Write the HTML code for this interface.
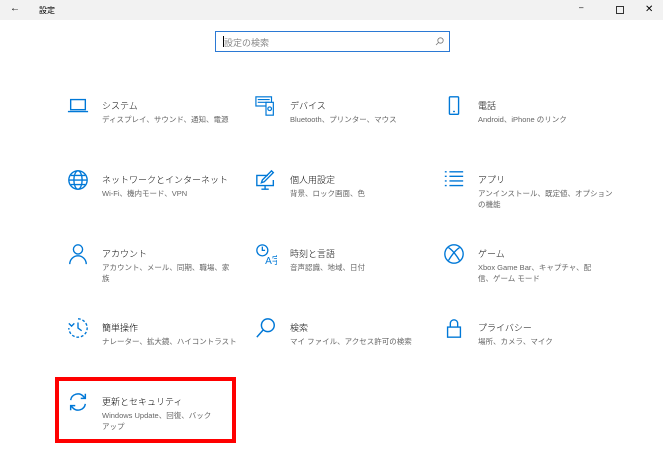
<!DOCTYPE html>
<html><head><meta charset="utf-8"><style>
*{margin:0;padding:0;box-sizing:border-box}
body{width:663px;height:450px;background:#fff;font-family:"Liberation Sans","Noto Sans CJK JP",sans-serif;position:relative;overflow:hidden;color:#000}
.tb{position:absolute;left:0;top:0;width:663px;height:20px;background:#f2f2f2}
.tb span{position:absolute;font-size:8px;top:5px}
.search{position:absolute;left:215px;top:31px;width:235px;height:21px;border:1.5px solid #2b79d4;background:#fff}
.search .ph{position:absolute;left:8px;top:4px;font-size:9px;color:#888}
.search .cur{position:absolute;left:7px;top:4px;width:1px;height:11px;background:#000}
.it{position:absolute}
.it .t{position:absolute;font-size:9px;white-space:nowrap;top:0;font-weight:300}
.it .s{position:absolute;font-size:7.5px;color:#666;top:15px;line-height:11px;width:150px}
.it svg{position:absolute;left:-35px;top:-4px;width:22px;height:22px}
.red{position:absolute;left:55px;top:377px;width:181px;height:66px;border:4px solid #f00}
</style></head><body>
<div class="tb"><span style="left:10px;font-size:10px;top:3px">←</span><span style="left:39px">設定</span>
<span style="left:579px;top:3px">–</span>
<div style="position:absolute;left:616px;top:6px;width:8px;height:8px;border:1px solid #333"></div>
<span style="left:645px;top:4px;font-size:10px">✕</span></div>
<div class="search"><div class="cur"></div><div class="ph">設定の検索</div>
<svg style="position:absolute;left:219px;top:5px" width="9" height="9" viewBox="0 0 9 9"><circle cx="5.5" cy="3.5" r="2.7" fill="none" stroke="#777" stroke-width="0.8"/><path d="M3.5 5.5L1 8" stroke="#777" stroke-width="0.8"/></svg></div>

<div class="it" style="left:102px;top:99px"><svg viewBox="0 0 24 24" fill="none" stroke="#0078d7" stroke-width="1.5"><rect x="4" y="5" width="16" height="11"/><path d="M1 18h22"/></svg><div class="t">システム</div><div class="s">ディスプレイ、サウンド、通知、電源</div></div>
<div class="it" style="left:290px;top:99px"><svg viewBox="0 0 24 24" fill="none" stroke="#0078d7" stroke-width="1.3"><rect x="1" y="2" width="17" height="10"/><path d="M3 5h13M3 8h13"/><rect x="12" y="8" width="8" height="14" fill="#fff"/><circle cx="16" cy="15" r="2"/></svg><div class="t">デバイス</div><div class="s">Bluetooth、プリンター、マウス</div></div>
<div class="it" style="left:478px;top:99px"><svg viewBox="0 0 24 24" fill="none" stroke="#0078d7" stroke-width="1.5"><rect x="7" y="2" width="10" height="19" rx="1"/><path d="M11 18h2"/></svg><div class="t">電話</div><div class="s">Android、iPhone のリンク</div></div>

<div class="it" style="left:102px;top:173px"><svg viewBox="0 0 24 24" fill="none" stroke="#0078d7" stroke-width="1.5"><circle cx="12" cy="12" r="10"/><ellipse cx="12" cy="12" rx="4.5" ry="10"/><path d="M2 12h20M4 7h16M4 17h16"/></svg><div class="t">ネットワークとインターネット</div><div class="s">Wi-Fi、機内モード、VPN</div></div>
<div class="it" style="left:290px;top:173px"><svg viewBox="0 0 24 24" fill="none" stroke="#0078d7" stroke-width="1.5"><path d="M14 7H2v11h18v-6M7 22h8M11 18v4"/><path d="M7 15l3-1 10-10-2-2L8 12z"/></svg><div class="t">個人用設定</div><div class="s">背景、ロック画面、色</div></div>
<div class="it" style="left:478px;top:173px"><svg viewBox="0 0 24 24" fill="none" stroke="#0078d7" stroke-width="1.5"><path d="M2 3h2M2 8h2M2 13h2M2 18h2M7 3h15M7 8h15M7 13h15M7 18h15"/></svg><div class="t">アプリ</div><div class="s">アンインストール、既定値、オプション<br>の機能</div></div>

<div class="it" style="left:102px;top:247px"><svg viewBox="0 0 24 24" fill="none" stroke="#0078d7" stroke-width="1.5"><circle cx="12" cy="7" r="5"/><path d="M3 23a9 9 0 0 1 18 0"/></svg><div class="t">アカウント</div><div class="s">アカウント、メール、同期、職場、家<br>族</div></div>
<div class="it" style="left:290px;top:247px"><svg viewBox="0 0 24 24" fill="none" stroke="#0078d7" stroke-width="1.4"><circle cx="8" cy="8" r="6"/><path d="M8 4v4h3"/><text x="11" y="23" font-size="11" fill="#0078d7" stroke="none" font-family="Liberation Sans">A字</text></svg><div class="t">時刻と言語</div><div class="s">音声認識、地域、日付</div></div>
<div class="it" style="left:478px;top:247px"><svg viewBox="0 0 24 24" fill="none" stroke="#0078d7" stroke-width="1.5"><circle cx="12" cy="12" r="10"/><path d="M6 5q6 4 12 14M18 5q-6 4-12 14"/></svg><div class="t">ゲーム</div><div class="s">Xbox Game Bar、キャプチャ、配<br>信、ゲーム モード</div></div>

<div class="it" style="left:102px;top:321px"><svg viewBox="0 0 24 24" fill="none" stroke="#0078d7" stroke-width="1.5"><path d="M12 2a10 10 0 1 1-10 10" stroke-dasharray="3 2"/><path d="M12 6v6l4 3"/><path d="M2 7l3 3 3-3"/></svg><div class="t">簡単操作</div><div class="s">ナレーター、拡大鏡、ハイコントラスト</div></div>
<div class="it" style="left:290px;top:321px"><svg viewBox="0 0 24 24" fill="none" stroke="#0078d7" stroke-width="1.6"><circle cx="14" cy="9" r="7"/><path d="M9 14l-7 8"/></svg><div class="t">検索</div><div class="s">マイ ファイル、アクセス許可の検索</div></div>
<div class="it" style="left:478px;top:321px"><svg viewBox="0 0 24 24" fill="none" stroke="#0078d7" stroke-width="1.5"><rect x="5" y="11" width="14" height="11"/><path d="M8 11V7a4 4 0 0 1 8 0v4"/></svg><div class="t">プライバシー</div><div class="s">場所、カメラ、マイク</div></div>

<div class="it" style="left:102px;top:395px"><svg viewBox="0 0 24 24" fill="none" stroke="#0078d7" stroke-width="1.6"><path d="M4 10a8 8 0 0 1 14-4l2 2"/><path d="M20 3v5h-5"/><path d="M20 14a8 8 0 0 1-14 4l-2-2"/><path d="M4 21v-5h5"/></svg><div class="t">更新とセキュリティ</div><div class="s">Windows Update、回復、バック<br>アップ</div></div>
<div class="red"></div>
</body></html>
